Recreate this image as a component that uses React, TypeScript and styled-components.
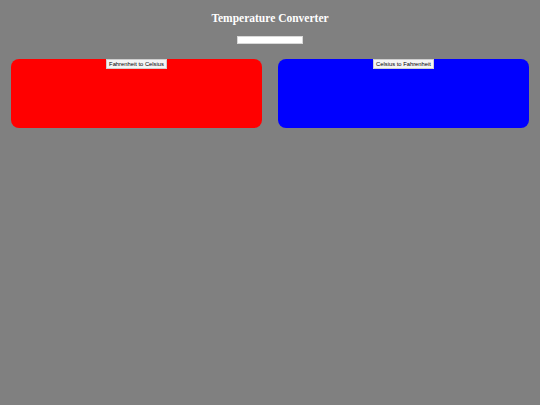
import React from "react";
import styled, { createGlobalStyle } from "styled-components";

const Global = createGlobalStyle`
  html, body { margin: 0; padding: 0; background: #808080; }
  body { width: 540px; height: 405px; overflow: hidden; }
`;

const Page = styled.div`
  display: flex;
  flex-direction: column;
  align-items: center;
  padding-top: 11px;
`;

const Title = styled.h1`
  margin: 0;
  font-family: "Liberation Serif", "Times New Roman", serif;
  font-weight: bold;
  font-size: 11.5px;
  line-height: 14px;
  color: #ffffff;
`;

const Input = styled.input`
  margin-top: 11px;
  width: 66px;
  height: 8px;
  box-sizing: border-box;
  border: 1px solid #d8d8d8;
  background: #ffffff;
  padding: 0;
  outline: none;
`;

const Panels = styled.div`
  align-self: stretch;
  display: grid;
  grid-template-columns: 1fr 1fr;
  gap: 16px;
  padding: 0 11px;
  margin-top: 15px;
`;

const Panel = styled.div<{ $color: string }>`
  height: 69px;
  background: ${(p) => p.$color};
  border-radius: 8px;
  display: flex;
  justify-content: center;
  align-items: flex-start;
`;

const Button = styled.button`
  font-family: "Liberation Sans", Arial, sans-serif;
  font-size: 5.8px;
  line-height: 6px;
  color: #000;
  background: #f4f4f4;
  border: 1px solid #cfcfcf;
  padding: 1px 2px;
  margin: 0;
  border-radius: 0;
`;

export default function App() {
  return (
    <>
      <Global />
      <Page>
        <Title>Temperature Converter</Title>
        <Input type="text" />
        <Panels>
          <Panel $color="#ff0000">
            <Button>Fahrenheit to Celsius</Button>
          </Panel>
          <Panel $color="#0000ff">
            <Button>Celsius to Fahrenheit</Button>
          </Panel>
        </Panels>
      </Page>
    </>
  );
}
